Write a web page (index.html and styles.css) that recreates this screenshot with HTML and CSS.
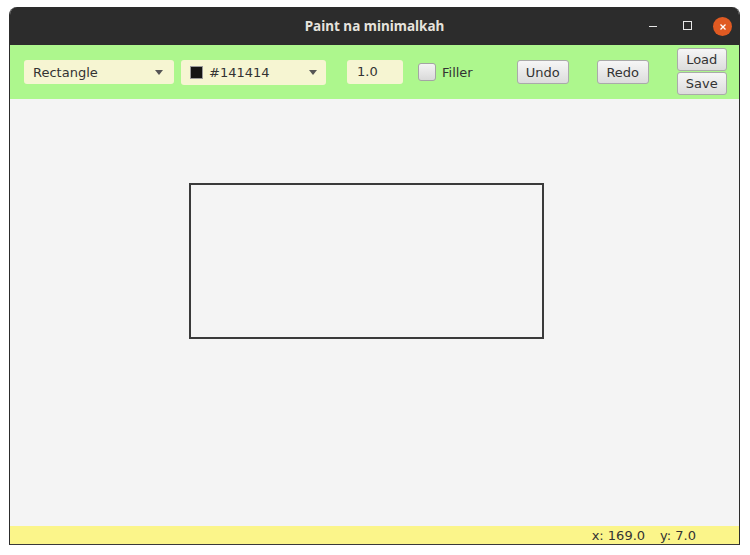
FILE: index.html
```html
<!DOCTYPE html>
<html>
<head>
<meta charset="utf-8">
<link rel="stylesheet" href="styles.css">
</head>
<body>
<div class="window">
  <div class="titlebar">
    <div class="title">Paint na minimalkah</div>
    <div class="controls">
      <span class="ctl min"><svg width="8" height="8" viewBox="0 0 8 8"><line x1="0" y1="3.5" x2="8" y2="3.5" stroke="#e8e8e8" stroke-width="1"/></svg></span>
      <span class="ctl max"><svg width="9" height="9" viewBox="0 0 9 9"><rect x="0.5" y="0.5" width="8" height="8" fill="none" stroke="#e8e8e8" stroke-width="1"/></svg></span>
      <span class="ctl close"><svg width="8" height="8" viewBox="0 0 8 8"><path d="M1.5 1.5 L6.5 6.5 M6.5 1.5 L1.5 6.5" stroke="#fff" stroke-width="1.3"/></svg></span>
    </div>
  </div>
  <div class="toolbar">
    <div class="combo shape">
      <span class="combo-text">Rectangle</span>
      <span class="arrow"></span>
    </div>
    <div class="combo picker">
      <span class="swatch"></span>
      <span class="combo-text">#141414</span>
      <span class="arrow"></span>
    </div>
    <div class="field">1.0</div>
    <label class="check">
      <span class="box"></span>
      <span class="check-text">Filler</span>
    </label>
    <button class="btn undo">Undo</button>
    <button class="btn redo">Redo</button>
    <div class="stack">
      <button class="btn small">Load</button>
      <button class="btn small">Save</button>
    </div>
  </div>
  <div class="canvas">
    <div class="shape-rect"></div>
  </div>
  <div class="status">
    <span>x: 169.0</span>
    <span>y: 7.0</span>
  </div>
</div>
</body>
</html>
```
FILE: styles.css
```css
html, body {
  margin: 0;
  padding: 0;
  background: #ffffff;
}
body {
  font-family: "DejaVu Sans", sans-serif;
  font-size: 13px;
  color: #333333;
}
.window {
  margin: 7px 0 0 9px;
  width: 731px;
  box-sizing: border-box;
  border-left: 1px solid #2c2c2c;
  border-right: 1px solid #2c2c2c;
  border-bottom: 1px solid #3a3a3a;
  border-radius: 8px 8px 0 0;
  overflow: hidden;
}
.titlebar {
  height: 38px;
  background: #2c2c2c;
  position: relative;
  display: flex;
  align-items: center;
  justify-content: center;
}
.title {
  font-family: "Noto Sans", sans-serif;
  font-weight: 700;
  font-size: 13.5px;
  color: #e6e3dd;
}
.controls {
  position: absolute;
  right: 7px;
  top: 10px;
  display: flex;
  align-items: center;
}
.ctl {
  display: flex;
  align-items: center;
  justify-content: center;
}
.min { margin-right: 26px; }
.max { margin-right: 21px; margin-top: -2px; }
.close {
  width: 19px;
  height: 19px;
  border-radius: 50%;
  background: #e05a22;
}
.toolbar {
  height: 54px;
  background: #adf78d;
  display: flex;
  align-items: center;
  padding-left: 14px;
  box-sizing: border-box;
}
.combo {
  height: 24px;
  background: #f6f5d2;
  border-radius: 3px;
  display: flex;
  align-items: center;
  box-sizing: border-box;
}
.shape {
  width: 150px;
  padding: 0 11px 0 9px;
}
.picker {
  width: 145px;
  margin-left: 7px;
  padding: 0 9px 0 9px;
  height: 25px;
}
.combo-text {
  flex: 1;
  color: #333;
}
.swatch {
  width: 11px;
  height: 11px;
  background: #141414;
  border: 1px solid #9a9a9a;
  margin-right: 6px;
}
.arrow {
  width: 0;
  height: 0;
  border-left: 4px solid transparent;
  border-right: 4px solid transparent;
  border-top: 5px solid #555;
}
.field {
  margin-left: 21px;
  width: 56px;
  height: 24px;
  background: #f6f5d2;
  border-radius: 3px;
  box-sizing: border-box;
  padding-left: 10px;
  line-height: 24px;
}
.check {
  margin-left: 15px;
  display: flex;
  align-items: center;
}
.box {
  width: 18px;
  height: 18px;
  box-sizing: border-box;
  border: 1px solid #a4a4a4;
  border-radius: 3px;
  background: linear-gradient(#f4f4f4, #d9d9d9);
}
.check-text {
  margin-left: 6px;
  color: #333;
}
.btn {
  font-family: "DejaVu Sans", sans-serif;
  font-size: 13px;
  color: #333;
  height: 24px;
  width: 52px;
  padding: 0;
  box-sizing: border-box;
  border: 1px solid #aaaaaa;
  border-radius: 3px;
  background: linear-gradient(#f6f6f6, #dcdcdc);
}
.undo { margin-left: 44px; }
.redo { margin-left: 28px; }
.stack {
  margin-left: 28px;
  display: flex;
  flex-direction: column;
  gap: 1px;
  margin-top: -2px;
}
.small {
  width: 50px;
  height: 23px;
}
.canvas {
  height: 427px;
  background: #f4f4f4;
  position: relative;
}
.shape-rect {
  position: absolute;
  left: 179px;
  top: 84px;
  width: 355px;
  height: 156px;
  box-sizing: border-box;
  border: 2px solid #3a3a3a;
}
.status {
  height: 18px;
  background: #fbf58a;
  display: flex;
  justify-content: flex-end;
  align-items: center;
  gap: 15px;
  padding-right: 43px;
  color: #333;
  font-size: 13px;
}
```
